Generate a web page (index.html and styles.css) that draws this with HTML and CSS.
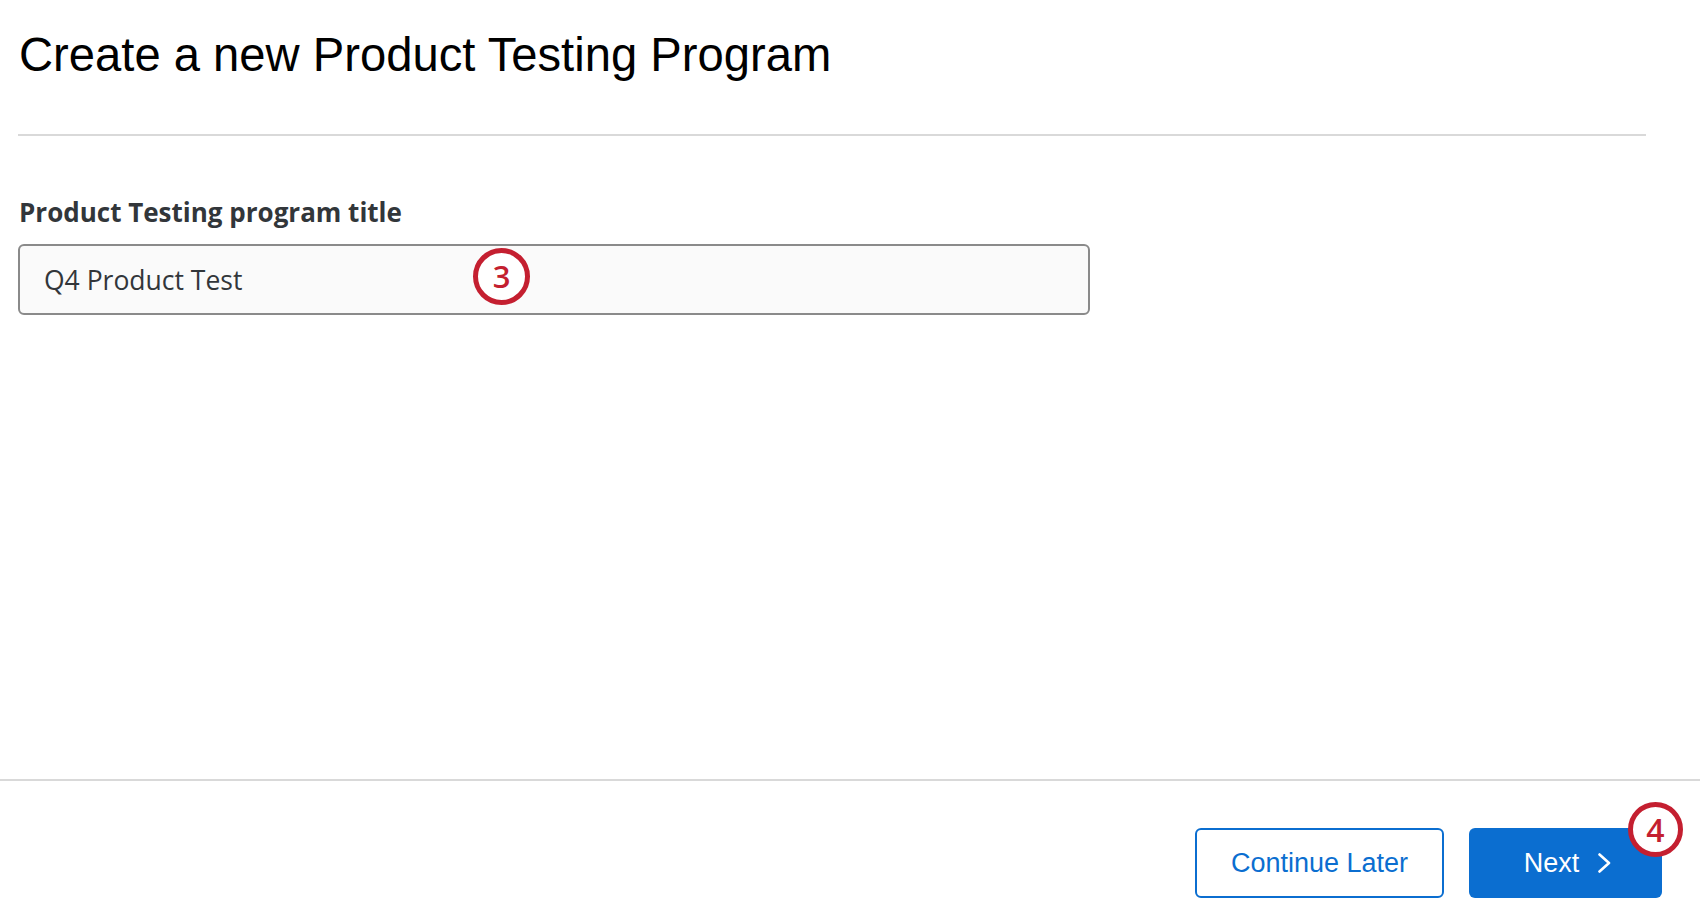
FILE: index.html
```html
<!DOCTYPE html>
<html lang="en">
<head>
<meta charset="utf-8">
<title>Create a new Product Testing Program</title>
<link rel="stylesheet" href="styles.css">
</head>
<body>
<div class="page">
  <main class="main">
    <h1 class="title">Create a new Product Testing Program</h1>
    <hr class="divider">
    <label class="field-label" for="program-title">Product Testing program title</label>
    <div class="field">
      <input id="program-title" class="text-input" type="text" value="Q4 Product Test">
      <span class="step step-3">3</span>
    </div>
  </main>
  <footer class="footer">
    <button class="btn btn-secondary" type="button">Continue Later</button>
    <button class="btn btn-primary" type="button">
      <span>Next</span>
      <svg class="chevron" width="13" height="20" viewBox="0 0 13 20" aria-hidden="true"><polyline points="1.5,1.5 11,10 1.5,18.5" fill="none" stroke="#ffffff" stroke-width="2.6" stroke-linecap="round" stroke-linejoin="round"/></svg>
      <span class="step step-4">4</span>
    </button>
  </footer>
</div>
</body>
</html>
```

FILE: styles.css
```css
html, body {
  margin: 0;
  padding: 0;
  background: #ffffff;
}

.page {
  height: 100vh;
  display: flex;
  flex-direction: column;
  font-family: "Open Sans", "Liberation Sans", sans-serif;
}

.main {
  flex: 1;
  padding: 0 54px 0 18px;
}

.title {
  margin: 32px 0 0 1px;
  font-family: "Liberation Sans", Arial, sans-serif;
  font-size: 47.2px;
  line-height: 46px;
  font-weight: 400;
  color: #000000;
}

.divider {
  margin: 56px 0 0 0;
  border: 0;
  height: 2px;
  background: #d9d9d9;
}

.field-label {
  display: block;
  margin-top: 60px;
  margin-left: 1px;
  font-size: 26px;
  line-height: 32px;
  font-weight: 700;
  color: #32363a;
}

.field {
  position: relative;
  margin-top: 16px;
  width: 1072px;
}

.text-input {
  display: block;
  box-sizing: border-box;
  width: 100%;
  height: 71px;
  margin: 0;
  padding: 0 24px;
  border: 2px solid #8a8a8a;
  border-radius: 6px;
  background: #fafafa;
  font-family: "Open Sans", "Liberation Sans", sans-serif;
  font-size: 26.5px;
  color: #32363a;
  outline: none;
}

.step {
  position: absolute;
  box-sizing: border-box;
  display: flex;
  align-items: center;
  justify-content: center;
  border: 5.5px solid #c41f30;
  border-radius: 50%;
  background: #ffffff;
  color: #c41f30;
  font-family: "Open Sans", "Liberation Sans", sans-serif;
  font-size: 31px;
  line-height: 1;
  font-weight: 600;
}

.step-3 {
  width: 57px;
  height: 57px;
  left: 455px;
  top: 4px;
}

.footer {
  display: flex;
  justify-content: flex-end;
  align-items: flex-start;
  gap: 25px;
  height: 143px;
  box-sizing: border-box;
  padding: 47px 38px 0 0;
  border-top: 2px solid #d9d9d9;
}

.btn {
  position: relative;
  box-sizing: border-box;
  height: 70px;
  margin: 0;
  border-radius: 6px;
  font-family: "Liberation Sans", Arial, sans-serif;
  font-size: 27px;
  font-weight: 400;
  display: flex;
  align-items: center;
  justify-content: center;
  cursor: pointer;
}

.btn-secondary {
  width: 249px;
  border: 2px solid #0b6ed0;
  background: #ffffff;
  color: #0b6ed0;
}

.btn-primary {
  width: 193px;
  gap: 19px;
  padding: 0 0 0 4px;
  border: 0;
  background: #0b6ed0;
  color: #ffffff;
}

.chevron {
  display: block;
}

.step-4 {
  width: 55px;
  height: 55px;
  left: 159px;
  top: -26px;
  font-size: 32px;
}
```
